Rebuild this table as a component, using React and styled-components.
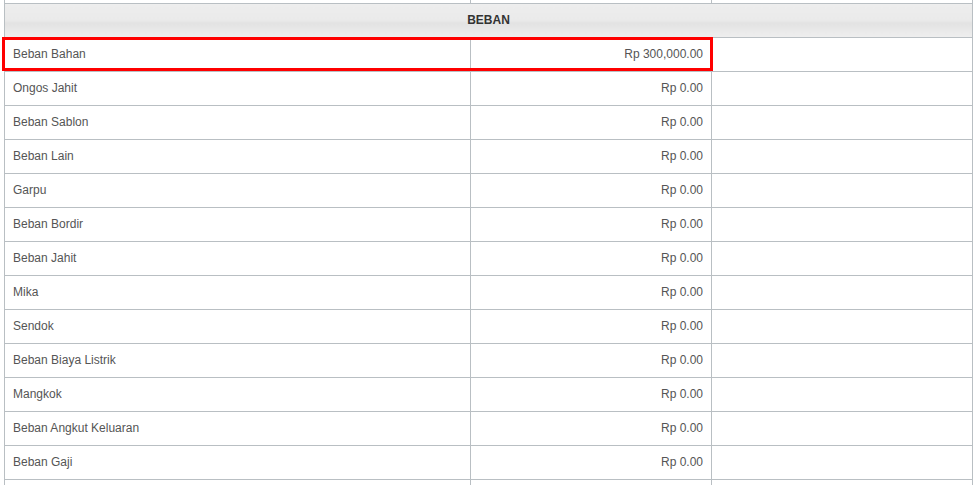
import React from 'react';
import styled, { createGlobalStyle } from 'styled-components';

const rows = [
  { name: 'Beban Bahan', amount: 'Rp 300,000.00' },
  { name: 'Ongos Jahit', amount: 'Rp 0.00' },
  { name: 'Beban Sablon', amount: 'Rp 0.00' },
  { name: 'Beban Lain', amount: 'Rp 0.00' },
  { name: 'Garpu', amount: 'Rp 0.00' },
  { name: 'Beban Bordir', amount: 'Rp 0.00' },
  { name: 'Beban Jahit', amount: 'Rp 0.00' },
  { name: 'Mika', amount: 'Rp 0.00' },
  { name: 'Sendok', amount: 'Rp 0.00' },
  { name: 'Beban Biaya Listrik', amount: 'Rp 0.00' },
  { name: 'Mangkok', amount: 'Rp 0.00' },
  { name: 'Beban Angkut Keluaran', amount: 'Rp 0.00' },
  { name: 'Beban Gaji', amount: 'Rp 0.00' },
  { name: '', amount: '' },
];

function App() {
  return (
    <>
      <GlobalStyle />
      <Wrapper>
        <Table>
          <colgroup>
            <col style={{ width: 466 }} />
            <col style={{ width: 241 }} />
            <col />
          </colgroup>
          <tbody>
            <tr>
              <Cell />
              <Cell />
              <Cell />
            </tr>
            <tr>
              <HeadCell colSpan={3}>BEBAN</HeadCell>
            </tr>
            {rows.map((row, i) => (
              <tr key={i}>
                <Cell>{row.name}</Cell>
                <Cell $right>{row.amount}</Cell>
                <Cell />
              </tr>
            ))}
          </tbody>
        </Table>
        <Highlight />
      </Wrapper>
    </>
  );
}

const GlobalStyle = createGlobalStyle`
  html, body {
    height: 485px;
    overflow: hidden;
  }
  body {
    margin: 0;
    background: #fff;
    font-family: "Liberation Sans", Arial, sans-serif;
  }
`

const Wrapper = styled.div`
  position: relative;
  margin: -31px 0 0 4px;
  width: 969px;
`

const Table = styled.table`
  width: 969px;
  border-collapse: collapse;
  table-layout: fixed;
  font-size: 12px;
  color: #555;
`

const Cell = styled.td`
  height: 34px;
  padding: 0 8px 2px;
  border: 1px solid #b9bfc3;
  text-align: ${p => (p.$right ? 'right' : 'left')};
  vertical-align: middle;
  box-sizing: border-box;
`

const HeadCell = styled.td`
  height: 34px;
  padding: 0 8px 2px;
  border: 1px solid #b9bfc3;
  box-sizing: border-box;
  text-align: center;
  font-weight: bold;
  color: #333;
  background: linear-gradient(#ededed 0%, #eaeaea 48%, #e2e2e2 56%, #efefef 100%);
`

const Highlight = styled.div`
  position: absolute;
  left: -2px;
  top: 68px;
  width: 711px;
  height: 34px;
  border: 3px solid #ff0000;
  box-sizing: border-box;
  pointer-events: none;
`

export default App;
